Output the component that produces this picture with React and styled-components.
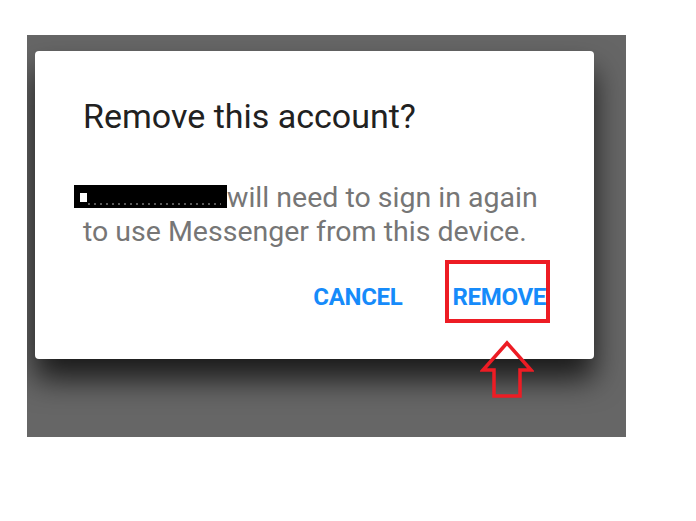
import React from "react";
import styled, { createGlobalStyle } from "styled-components";

const Global = createGlobalStyle`
  body {
    margin: 0;
    background: #ffffff;
    font-family: Roboto, "Noto Sans", sans-serif;
  }
`;

const Page = styled.div`
  padding: 35px 0 0 27px;
`;

const Backdrop = styled.div`
  position: relative;
  width: 599px;
  height: 402px;
  background: #666666;
  padding: 16px 0 0 8px;
  box-sizing: border-box;
  overflow: hidden;
`;

const Dialog = styled.div`
  width: 559px;
  height: 308px;
  box-sizing: border-box;
  background: #ffffff;
  border-radius: 4px;
  box-shadow: 0 20px 30px rgba(0, 0, 0, 0.75);
  padding: 45px 48px 0 48px;
  display: flex;
  flex-direction: column;
`;

const Title = styled.h2`
  margin: 0;
  font-size: 34px;
  font-weight: 400;
  line-height: 40px;
  color: #212121;
`;

const Body = styled.p`
  margin: 45px 0 0 0;
  font-size: 28.5px;
  line-height: 34px;
  color: #767676;
`;

const Redacted = styled.span`
  position: relative;
  display: inline-block;
  width: 153px;
  height: 23px;
  margin-left: -9px;
  background: #000000;
  vertical-align: -1px;
  &::before {
    content: "";
    position: absolute;
    left: 6px;
    top: 8px;
    width: 7px;
    height: 9px;
    background: #ffffff;
  }
  &::after {
    content: "";
    position: absolute;
    left: 14px;
    right: 6px;
    bottom: 3px;
    height: 2px;
    background: repeating-linear-gradient(
      90deg,
      #ffffff 0 2px,
      transparent 2px 6px
    );
    opacity: 0.35;
  }
`;

const Actions = styled.div`
  display: flex;
  justify-content: flex-end;
  align-items: baseline;
  gap: 43px;
  margin-top: 11px;
`;

const Action = styled.button`
  border: none;
  background: none;
  padding: 0;
  font-family: Roboto, sans-serif;
  font-weight: 700;
  font-size: 24px;
  letter-spacing: -0.3px;
  line-height: 28px;
  color: #168bfa;
  cursor: pointer;
`;

const Highlight = styled.div`
  border: 4px solid #ed1c24;
  padding: 19px 0 8px 3px;
  margin-right: -4px;
  display: flex;
`;

const Arrow = styled.svg`
  position: absolute;
  left: 453px;
  top: 305px;
`;

export default function App() {
  return (
    <>
      <Global />
      <Page>
        <Backdrop>
          <Dialog>
            <Title>Remove this account?</Title>
            <Body>
              <Redacted />
              will need to sign in again
              <br />
              to use Messenger from this device.
            </Body>
            <Actions>
              <Action>CANCEL</Action>
              <Highlight>
                <Action>REMOVE</Action>
              </Highlight>
            </Actions>
          </Dialog>
          <Arrow width="54" height="60" viewBox="0 0 54 60">
            <path
              d="M27 3 L51 30 L40 30 L40 56 L14 56 L14 30 L3 30 Z"
              fill="none"
              stroke="#ed1c24"
              strokeWidth="3.5"
              strokeLinejoin="miter"
            />
          </Arrow>
        </Backdrop>
      </Page>
    </>
  );
}
